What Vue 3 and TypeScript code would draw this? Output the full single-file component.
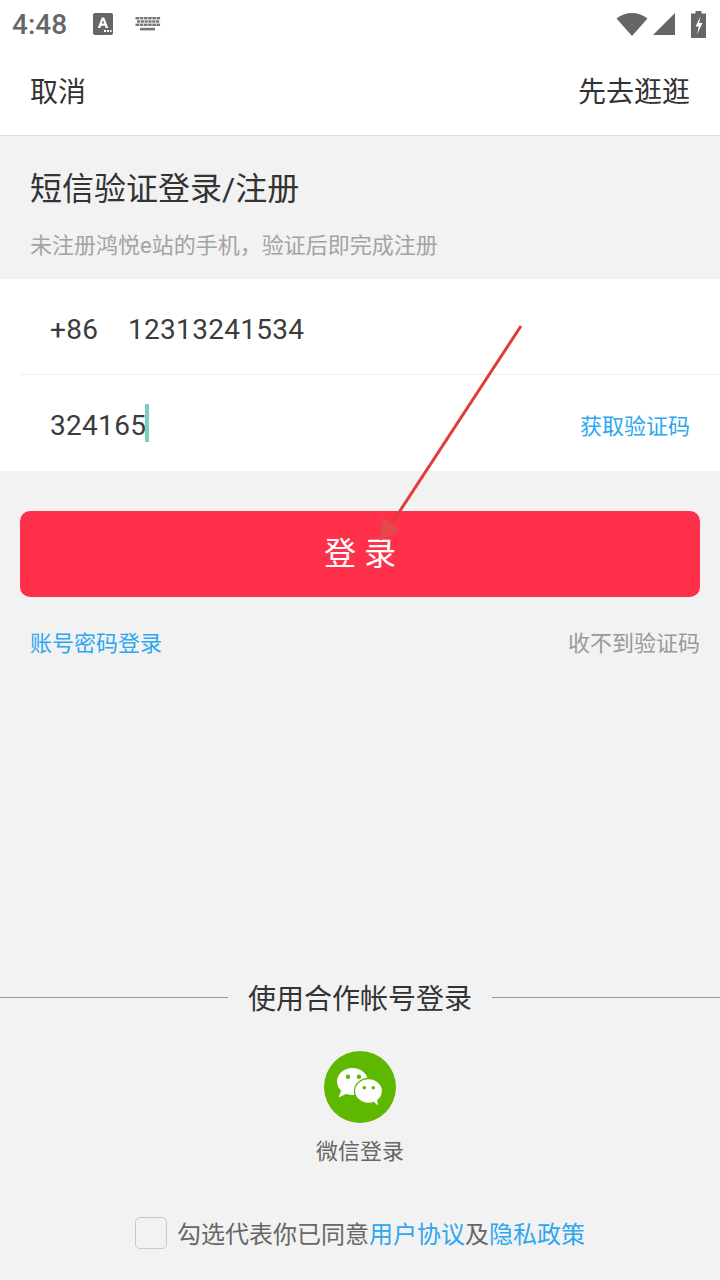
<script setup lang="ts">
const keys = [0, 1, 2, 3, 4, 5]
</script>

<template>
  <div class="page">
    <div class="status">
      <span class="time">4:48</span>
      <svg class="ic-a" width="20" height="22" viewBox="0 0 20 22">
        <rect x="0" y="0" width="20" height="22" rx="2" fill="#666" />
        <path d="M4.800 15 L8.800 4.500 h2.400 L15.200 15 h-2.500 l-.7-2.200 H8 L7.300 15z M8.800 10.600 h2.400 L10 7z" fill="#fff" />
        <path d="M11 17h2v2h-2zM14 17h2v2h-2zM17 17h1.500v2H17z" fill="#fff" />
      </svg>
      <svg class="ic-kb" width="26" height="14" viewBox="0 0 26 14">
        <g fill="#777">
          <template v-for="k in keys" :key="k">
            <rect :x="0.5 + k * 4.2" y="0" width="3.600" height="2.400" />
            <rect :x="2 + k * 3.800" y="3.300" width="3.200" height="2.400" />
            <rect :x="0.5 + k * 4.2" y="6.600" width="3.600" height="2.400" />
          </template>
          <rect x="5" y="10.800" width="15" height="2.600" />
        </g>
      </svg>
      <span class="grow"></span>
      <svg width="32" height="24" viewBox="0 0 32 24">
        <path d="M0.500 6.500 C9 -1 23 -1 31.500 6.500 L16 24z" fill="#666" />
      </svg>
      <svg class="ic-signal" width="22" height="22" viewBox="0 0 22 22">
        <path d="M0 22 L22 0 V22z" fill="#666" />
      </svg>
      <svg class="ic-bat" width="15" height="27" viewBox="0 0 15 27">
        <path d="M4.500 0h6v2.500H15V27H0V2.500h4.500z" fill="#666" />
        <path d="M9.500 5.500 L4.500 15.500 h3.200 L6 23.500 L11.500 12 h-3.300z" fill="#fff" />
      </svg>
    </div>

    <header class="toolbar">
      <span>取消</span>
      <span>先去逛逛</span>
    </header>

    <section class="intro">
      <h1>短信验证登录/注册</h1>
      <p>未注册鸿悦e站的手机，验证后即完成注册</p>
    </section>

    <section class="form">
      <div class="row first">
        <span class="code">+86</span>
        <span class="num">12313241534</span>
      </div>
      <div class="row">
        <span class="num sms">324165</span><span class="caret"></span>
        <span class="grow"></span>
        <span class="get">获取验证码</span>
      </div>
    </section>

    <div class="btn-wrap">
      <button class="login">登 录</button>
    </div>

    <div class="links">
      <span class="blue">账号密码登录</span>
      <span class="gray">收不到验证码</span>
    </div>

    <div class="spacer"></div>

    <div class="partner">
      <i></i>
      <span>使用合作帐号登录</span>
      <i></i>
    </div>

    <div class="wechat">
      <svg width="72" height="72" viewBox="0 0 72 72">
        <circle cx="36" cy="36" r="36" fill="#5fb800" />
        <ellipse cx="28.500" cy="30.500" rx="15.500" ry="13.500" fill="#fff" />
        <path d="M17 40 L14.500 46.500 L23 42.500z" fill="#fff" />
        <ellipse cx="44.500" cy="40" rx="14" ry="12.500" fill="#fff" stroke="#5fb800" stroke-width="1.300" />
        <path d="M49 50 L54 54.500 L53 48z" fill="#fff" />
        <circle cx="24" cy="25.700" r="2.200" fill="#5fb800" />
        <circle cx="35" cy="25.700" r="2.200" fill="#5fb800" />
        <circle cx="40.300" cy="36.700" r="1.800" fill="#5fb800" />
        <circle cx="49.300" cy="36.700" r="1.800" fill="#5fb800" />
      </svg>
      <span>微信登录</span>
    </div>

    <div class="agree">
      <span class="box"></span>
      <span class="agree-text">勾选代表你已同意<em>用户协议</em>及<em>隐私政策</em></span>
    </div>

    <svg class="arrow" width="720" height="1280" viewBox="0 0 720 1280">
      <line x1="521" y1="326" x2="392" y2="523" stroke="#e03c3c" stroke-width="3" />
      <path d="M380 541 L382 517 L401 529z" fill="#e54848" />
    </svg>
  </div>
</template>

<style>
body {
  margin: 0;
}
</style>

<style scoped>
.page {
  position: relative;
  width: 720px;
  height: 1280px;
  overflow: hidden;
  display: flex;
  flex-direction: column;
  background: #f2f2f2;
  color: #333;
  font-family: Roboto, "Noto Sans CJK SC", sans-serif;
}

.grow {
  flex: 1;
}

.status {
  height: 48px;
  display: flex;
  align-items: center;
  padding: 0 14px 0 12px;
  background: #fff;
  box-sizing: border-box;
}

.time {
  font-size: 28px;
  font-weight: 500;
  color: #666;
  width: 81px;
}

.ic-kb {
  margin-left: 22px;
}

.ic-a {
  margin-bottom: 1px;
}

.ic-signal {
  margin-left: 5px;
}

.ic-bat {
  margin-left: 16px;
}

.toolbar {
  display: flex;
  justify-content: space-between;
  align-items: center;
  padding: 0 30px 4px;
  height: 83px;
  background: #fff;
  border-bottom: 1px solid #ddd;
  font-size: 28px;
  color: #333;
}

.intro {
  padding: 31px 30px 20px;
  height: 143px;
  box-sizing: border-box;
}

.intro h1 {
  margin: 0;
  font-size: 32px;
  font-weight: 400;
  line-height: 44px;
}

.intro p {
  margin: 19px 0 0;
  font-size: 22px;
  line-height: 32px;
  color: #a3a3a3;
}

.form {
  background: #fff;
  padding-left: 20px;
}

.row {
  display: flex;
  align-items: center;
  height: 96px;
  padding: 0 30px;
  box-sizing: border-box;
  font-size: 28px;
  color: #3c3c3c;
}

.row.first {
  height: 96px;
  border-bottom: 1px solid #eee;
  padding-top: 6px;
}

.code {
  width: 78px;
  letter-spacing: 0.3px;
}

.num {
  letter-spacing: 0.3px;
}

.sms {
  margin-top: 4px;
}

.caret {
  width: 4px;
  height: 38px;
  background: #7ccfc0;
  margin-left: -1px;
}

.get {
  font-size: 22px;
  color: #2ea7f0;
  margin-top: 2px;
}

.btn-wrap {
  padding: 40px 20px 0;
}

.login {
  display: block;
  width: 100%;
  height: 86px;
  border: 0;
  padding: 0 0 6px;
  border-radius: 10px;
  background: #ff304a;
  color: #fff;
  font-family: inherit;
  font-size: 32px;
}

.links {
  display: flex;
  justify-content: space-between;
  padding: 31px 20px 0 30px;
  font-size: 22px;
  line-height: 32px;
}

.blue {
  color: #2ea7f0;
}

.gray {
  color: #999;
}

.spacer {
  flex: 1;
}

.partner {
  display: flex;
  align-items: center;
  gap: 20px;
  font-size: 28px;
  line-height: 40px;
}

.partner i {
  flex: 1;
  height: 1px;
  background: #999;
  margin-bottom: 6px;
}

.wechat {
  display: flex;
  flex-direction: column;
  align-items: center;
  margin-top: 31px;
  gap: 13px;
  font-size: 22px;
  color: #666;
}

.wechat span {
  line-height: 32px;
}

.agree {
  display: flex;
  align-items: center;
  justify-content: center;
  gap: 10px;
  margin: 49px 0 27px;
  font-size: 24px;
  color: #666;
}

.box {
  width: 30px;
  height: 30px;
  border: 1px solid #c8c8c8;
  border-radius: 5px;
  margin-bottom: 4px;
}

.agree-text {
  line-height: 34px;
}

.agree-text em {
  font-style: normal;
  color: #2ea7f0;
}

.arrow {
  position: absolute;
  left: 0;
  top: 0;
  pointer-events: none;
}
</style>
